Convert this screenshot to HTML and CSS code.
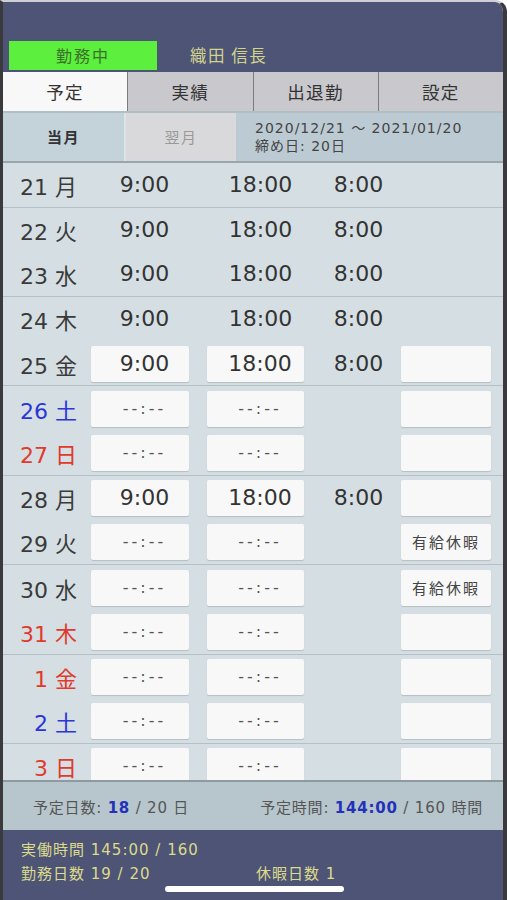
FILE: index.html
```html
<!DOCTYPE html>
<html lang="ja">
<head>
<meta charset="UTF-8" />
<meta name="viewport" content="width=device-width, initial-scale=1" />
<title>予定</title>
<link rel="stylesheet" href="styles.css">
</head>
<body>
<div class="phone">

  <header class="top">
    <div class="status">勤務中</div>
    <div class="user">織田 信長</div>
  </header>

  <nav class="tabs">
    <a class="tab active">予定</a>
    <a class="tab">実績</a>
    <a class="tab">出退勤</a>
    <a class="tab">設定</a>
  </nav>

  <section class="period">
    <div class="month cur">当月</div>
    <div class="month next">翌月</div>
    <div class="range">
      <div>2020/12/21 〜 2021/01/20</div>
      <div>締め日: 20日</div>
    </div>
  </section>

  <section class="days">
    <div class="row sep">
      <div class="day">21 月</div>
      <div class="cell t">9:00</div>
      <div class="cell t">18:00</div>
      <div class="cell hrs">8:00</div>
      <div></div>
    </div>
    <div class="row">
      <div class="day">22 火</div>
      <div class="cell t">9:00</div>
      <div class="cell t">18:00</div>
      <div class="cell hrs">8:00</div>
      <div></div>
    </div>
    <div class="row sep">
      <div class="day">23 水</div>
      <div class="cell t">9:00</div>
      <div class="cell t">18:00</div>
      <div class="cell hrs">8:00</div>
      <div></div>
    </div>
    <div class="row">
      <div class="day">24 木</div>
      <div class="cell t">9:00</div>
      <div class="cell t">18:00</div>
      <div class="cell hrs">8:00</div>
      <div></div>
    </div>
    <div class="row sep">
      <div class="day">25 金</div>
      <div class="box t">9:00</div>
      <div class="box t">18:00</div>
      <div class="cell hrs">8:00</div>
      <div class="box kind"></div>
    </div>
    <div class="row">
      <div class="day sat">26 土</div>
      <div class="box empty">--:--</div>
      <div class="box empty">--:--</div>
      <div class="cell hrs"></div>
      <div class="box kind"></div>
    </div>
    <div class="row sep">
      <div class="day sun">27 日</div>
      <div class="box empty">--:--</div>
      <div class="box empty">--:--</div>
      <div class="cell hrs"></div>
      <div class="box kind"></div>
    </div>
    <div class="row">
      <div class="day">28 月</div>
      <div class="box t">9:00</div>
      <div class="box t">18:00</div>
      <div class="cell hrs">8:00</div>
      <div class="box kind"></div>
    </div>
    <div class="row sep">
      <div class="day">29 火</div>
      <div class="box empty">--:--</div>
      <div class="box empty">--:--</div>
      <div class="cell hrs"></div>
      <div class="box kind">有給休暇</div>
    </div>
    <div class="row">
      <div class="day">30 水</div>
      <div class="box empty">--:--</div>
      <div class="box empty">--:--</div>
      <div class="cell hrs"></div>
      <div class="box kind">有給休暇</div>
    </div>
    <div class="row sep">
      <div class="day sun">31 木</div>
      <div class="box empty">--:--</div>
      <div class="box empty">--:--</div>
      <div class="cell hrs"></div>
      <div class="box kind"></div>
    </div>
    <div class="row">
      <div class="day sun">1 金</div>
      <div class="box empty">--:--</div>
      <div class="box empty">--:--</div>
      <div class="cell hrs"></div>
      <div class="box kind"></div>
    </div>
    <div class="row sep">
      <div class="day sat">2 土</div>
      <div class="box empty">--:--</div>
      <div class="box empty">--:--</div>
      <div class="cell hrs"></div>
      <div class="box kind"></div>
    </div>
    <div class="row">
      <div class="day sun">3 日</div>
      <div class="box empty">--:--</div>
      <div class="box empty">--:--</div>
      <div class="cell hrs"></div>
      <div class="box kind"></div>
    </div>
  </section>

  <section class="summary">
    <span>予定日数: <b>18</b> / 20 日</span>
    <span>予定時間: <b>144:00</b> / 160 時間</span>
  </section>

  <footer class="foot">
    <div class="line">実働時間 145:00 / 160</div>
    <div class="line two">
      <span>勤務日数 19 / 20</span>
      <span>休暇日数 1</span>
    </div>
    <div class="home"></div>
  </footer>

</div>
</body>
</html>
```

FILE: styles.css
```css
html, body {
  margin: 0;
  padding: 0;
  background: #ffffff;
}
body {
  font-family: "DejaVu Sans", "Noto Sans CJK JP", sans-serif;
  color: #333;
}
.phone {
  width: 507px;
  height: 900px;
  box-sizing: border-box;
  border-left: 3px solid #3a3a3c;
  border-right: 4px solid #3a3a3c;
  border-top: 2px solid #d0d0d4;
  border-top-right-radius: 12px;
  overflow: hidden;
  display: flex;
  flex-direction: column;
  background: #d5dfe3;
}

/* header */
.top {
  height: 70px;
  background: #4e5476;
  display: flex;
  align-items: flex-end;
  padding: 0 0 2px 6px;
  box-sizing: border-box;
}
.status {
  width: 148px;
  height: 29px;
  background: #5def3d;
  color: #3c6f2c;
  font-family: "Noto Sans CJK JP", sans-serif;
  font-size: 16px;
  letter-spacing: 2px;
  line-height: 29px;
  text-align: center;
}
.user {
  margin-left: 33px;
  color: #d3d38c;
  font-family: "Noto Sans CJK JP", sans-serif;
  font-size: 16.5px;
  letter-spacing: 1.5px;
  line-height: 29px;
}

/* tabs */
.tabs {
  display: flex;
  height: 39px;
  background: #c9c8cc;
  border-bottom: 2px solid #b2bdc4;
}
.tab {
  flex: 1;
  text-align: center;
  line-height: 39px;
  font-family: "Noto Sans CJK JP", sans-serif;
  font-size: 17.5px;
  letter-spacing: 1.5px;
  color: #333;
  border-left: 1px solid #7c7c80;
}
.tab:first-child {
  border-left: none;
}
.tab.active {
  background: #f8f8f8;
}

/* period */
.period {
  display: flex;
  height: 48px;
  background: #bccbd3;
  border-bottom: 2px solid #9aa6ac;
}
.month {
  text-align: center;
  line-height: 48px;
  font-family: "Noto Sans CJK JP", sans-serif;
  font-size: 15px;
  letter-spacing: 1.5px;
}
.month.cur {
  width: 121px;
  background: #c4d2d9;
  font-weight: bold;
  color: #333;
  border-right: 2px solid #dde3e6;
}
.month.next {
  width: 110px;
  background: #d9d9db;
  color: #999;
}
.range {
  padding: 6px 0 0 19px;
  font-size: 14px;
  letter-spacing: 1px;
  line-height: 18px;
  color: #444;
}

/* day rows */
.days {
  flex: 1;
  overflow: hidden;
}
.row {
  display: grid;
  grid-template-columns: 88px 116px 97px 97px 90px;
  align-items: center;
  height: 44.7px;
  box-sizing: border-box;
}
.row.sep {
  border-bottom: 1px solid #b4c0c6;
}
.day {
  text-align: right;
  padding-right: 14px;
  font-size: 22px;
  color: #3a3a3a;
  white-space: nowrap;
}
.day.sat {
  color: #2b35d8;
}
.day.sun {
  color: #e03a2c;
}
.cell, .box {
  height: 36px;
  line-height: 36px;
  text-align: center;
  box-sizing: border-box;
}
.box {
  width: 98px;
  background: #f8f8f8;
  border-radius: 2px;
  box-shadow: 0 1px 1px rgba(0, 0, 0, 0.15);
  padding-left: 9px;
}
.row > .box:nth-child(3) {
  width: 97px;
}
.t {
  font-size: 22px;
  color: #333;
}
.cell.t {
  width: 98px;
  padding-left: 9px;
}
.hrs {
  font-size: 22px;
  color: #333;
  padding-left: 12px;
}
.empty {
  font-size: 16px;
  color: #555;
  letter-spacing: 3px;
}
.box.kind {
  width: 90px;
  padding-left: 0;
  font-family: "Noto Sans CJK JP", sans-serif;
  font-size: 15px;
  letter-spacing: 2px;
  color: #444;
}

/* summary */
.summary {
  height: 48px;
  background: #b7c5cc;
  border-top: 2px solid #8f9aa0;
  display: flex;
  justify-content: space-between;
  align-items: center;
  padding: 0 20px 0 30px;
  font-size: 15px;
  letter-spacing: 0.8px;
  color: #555;
  flex-shrink: 0;
}
.summary b {
  color: #2232b8;
}

/* footer */
.foot {
  height: 70px;
  background: #4e5476;
  flex-shrink: 0;
  position: relative;
  padding: 8px 0 0 18px;
  box-sizing: border-box;
  color: #dcdb8c;
  font-size: 15px;
  letter-spacing: 1px;
}
.line {
  line-height: 24px;
}
.line.two {
  display: flex;
}
.line.two span:first-child {
  width: 235px;
}
.home {
  position: absolute;
  left: 162px;
  bottom: 8px;
  width: 179px;
  height: 6px;
  border-radius: 3px;
  background: #ffffff;
}
```
